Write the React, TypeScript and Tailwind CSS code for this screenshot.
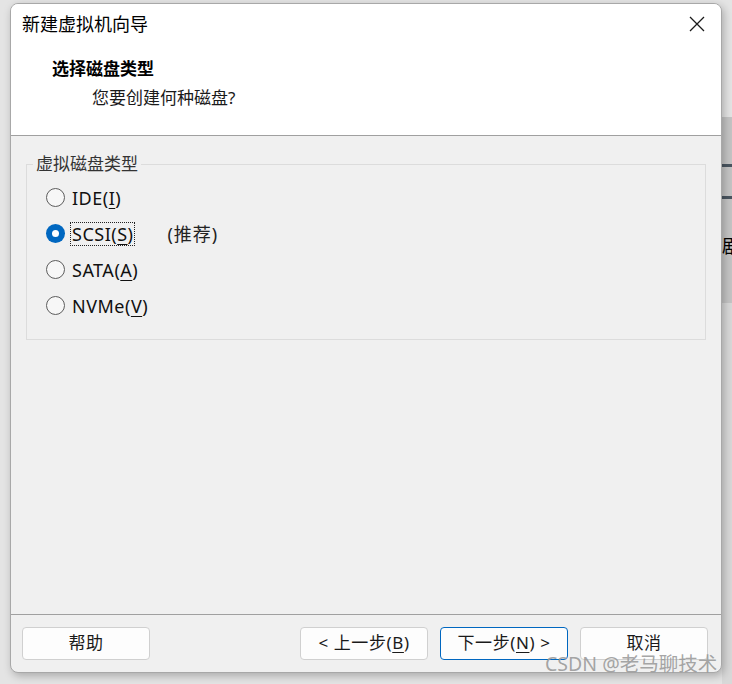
import React from "react";

const options = [
  { label: "IDE", key: "I", checked: false },
  { label: "SCSI", key: "S", checked: true, note: "(推荐)" },
  { label: "SATA", key: "A", checked: false },
  { label: "NVMe", key: "V", checked: false },
];

function Radio({ checked }: { checked: boolean }) {
  if (checked) {
    return (
      <span className="flex h-[19px] w-[19px] items-center justify-center rounded-full bg-[#0067c0]">
        <span className="h-[7px] w-[7px] rounded-full bg-white" />
      </span>
    );
  }
  return <span className="h-[19px] w-[19px] rounded-full border border-[#5d5d5d] bg-[#f7f7f7]" />;
}

function Btn({ children, primary }: { children: React.ReactNode; primary?: boolean }) {
  return (
    <button
      className={
        "flex h-[33px] w-[128px] items-center justify-center rounded-[4px] bg-[#fdfdfd] text-[17px] tracking-[0.6px] text-[#1a1a1a] " +
        (primary ? "border border-[#0067c0]" : "border border-[#d0d0d0]")
      }
    >
      {children}
    </button>
  );
}

export default function App() {
  return (
    <div
      className="relative h-[684px] w-[732px] overflow-hidden bg-[#e4e4e4] pl-[10px] pt-[3px]"
      style={{ fontFamily: '"Noto Sans", "Noto Sans CJK SC", sans-serif' }}
    >
      {/* partial window behind, on the right */}
      <div className="absolute left-[722px] top-[117px] flex h-[186px] w-[20px] flex-col bg-[#c4c4c4]">
        <div className="mt-[47px] h-[3px] bg-[#4a5560]" />
        <div className="mt-[29px] h-[3px] bg-[#4a5560]" />
        <div className="mt-[36px] text-[18px] leading-[22px] text-black">剧</div>
      </div>
      <div className="absolute left-[722px] top-[303px] h-[381px] w-[20px] bg-[#d8d8d8]" />

      <div className="relative flex h-[670px] w-[712px] flex-col overflow-hidden rounded-[8px] border border-[#a8a8a8] bg-[#f0f0f0] shadow-[2px_3px_8px_rgba(0,0,0,0.25)]">
        {/* header */}
        <div className="flex h-[132px] flex-col border-b border-[#a0a0a0] bg-white">
          <div className="flex h-[40px] items-center justify-between pl-[11px] pr-[14px]">
            <span className="text-[18px] text-black">新建虚拟机向导</span>
            <svg width="18" height="18" viewBox="0 0 18 18" className="mr-[1px]">
              <path d="M2 2L16 16M16 2L2 16" stroke="#1a1a1a" strokeWidth="1.3" />
            </svg>
          </div>
          <div className="pl-[41px] pt-[14px] text-[17px] font-bold leading-[22px] text-black">选择磁盘类型</div>
          <div className="pl-[81px] pt-[7px] text-[17px] leading-[22px] text-[#1a1a1a]">您要创建何种磁盘?</div>
        </div>

        {/* body */}
        <div className="flex-1 px-[15px] pt-[28px]">
          <div className="relative h-[176px] w-[680px] border border-[#dcdcdc]">
            <span className="absolute -top-[12px] left-[6px] bg-[#f0f0f0] px-[3px] text-[17px] leading-[22px] text-[#333]">
              虚拟磁盘类型
            </span>
            <div className="flex flex-col gap-[17px] pl-[19px] pt-[23px]">
              {options.map((o) => (
                <div key={o.label} className="flex h-[19px] items-center">
                  <Radio checked={o.checked} />
                  <span
                    className={
                      "ml-[6px] px-[1px] text-[18px] leading-[22px] tracking-[0.5px] text-[#111] " +
                      (o.checked ? "outline-1 outline-dotted outline-[#222]" : "")
                    }
                  >
                    {o.label}(<span className="underline underline-offset-[3px]">{o.key}</span>)
                  </span>
                  {o.note && (
                    <span className="ml-[33px] text-[18px] leading-[22px] tracking-[1px] text-[#222]">{o.note}</span>
                  )}
                </div>
              ))}
            </div>
          </div>
        </div>

        {/* footer */}
        <div className="flex h-[58px] items-center border-t border-[#a0a0a0] pl-[11px] pr-[13px] pb-[1px]">
          <Btn>帮助</Btn>
          <div className="ml-auto flex gap-[12px]">
            <Btn>
              &lt; 上一步(<span className="underline underline-offset-[3px]">B</span>)
            </Btn>
            <Btn primary>
              下一步(<span className="underline underline-offset-[3px]">N</span>) &gt;
            </Btn>
            <Btn>取消</Btn>
          </div>
        </div>
      </div>

      <div className="absolute left-[545px] top-[652px] text-[19.5px] leading-[24px] text-[#9a9a9a]/90">
        CSDN @老马聊技术
      </div>
    </div>
  );
}
